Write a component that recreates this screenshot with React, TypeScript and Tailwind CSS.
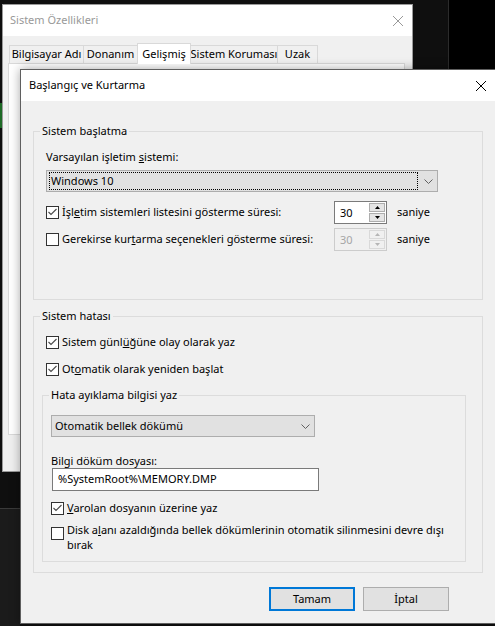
import React from 'react';

function Box({ checked }: { checked?: boolean }) {
  return (
    <span className="w-[13px] h-[13px] shrink-0 border border-[#333333] bg-white flex items-center justify-center">
      {checked && (
        <svg width="11" height="11" viewBox="0 0 11 11">
          <path d="M1.5 5 L4 7.5 L9.5 2" fill="none" stroke="#4a4a4a" strokeWidth="1.1" />
        </svg>
      )}
    </span>
  );
}

function Chevron() {
  return (
    <svg width="9" height="5" viewBox="0 0 9 5">
      <path d="M0.5 0.5 L4.5 4.5 L8.5 0.5" fill="none" stroke="#606060" strokeWidth="1" />
    </svg>
  );
}

function CloseX({ color }: { color: string }) {
  return (
    <svg width="10" height="10" viewBox="0 0 10 10">
      <path d="M0 0 L10 10 M10 0 L0 10" stroke={color} strokeWidth="1" />
    </svg>
  );
}

function Spin({ disabled }: { disabled?: boolean }) {
  const tri = disabled ? '#b5b5b5' : '#000000';
  return (
    <div
      className={
        disabled
          ? 'flex w-[53px] h-[23px] shrink-0 border border-[#cccccc] bg-[#f0f0f0] text-[#a6a6a6]'
          : 'flex w-[53px] h-[23px] shrink-0 border border-[#7a7a7a] bg-white'
      }
    >
      <span className="flex-1 pl-[5px] leading-[21px]">30</span>
      <div className="w-[18px] flex flex-col gap-px p-px">
        {['M0 3 L5 3 L2.5 0 Z', 'M0 0 L5 0 L2.5 3 Z'].map((d) => (
          <div
            key={d}
            className={
              disabled
                ? 'flex-1 flex items-center justify-center border border-[#d9d9d9] bg-[#f0f0f0]'
                : 'flex-1 flex items-center justify-center border border-[#adadad] bg-[#e5e5e5]'
            }
          >
            <svg width="5" height="3" viewBox="0 0 5 3">
              <path d={d} fill={tri} />
            </svg>
          </div>
        ))}
      </div>
    </div>
  );
}

export default function App() {
  return (
    <div className="relative w-[495px] h-[626px] overflow-hidden bg-[#0f0f0f] font-['Noto_Sans',sans-serif] text-[11px] text-black whitespace-nowrap">
      {/* desktop behind the windows */}
      <div className="absolute left-[448px] top-0 w-[47px] h-[69px] bg-black border-l border-[#2b2b2b]" />
      <div className="absolute left-0 top-[103px] w-[2px] h-[25px] bg-[#1e6a26]" />
      <div className="absolute left-0 top-[508px] w-[20px] h-[118px] bg-[#1b1b1b] border-t border-[#3a3a3a]" />

      {/* Sistem Özellikleri (inactive) */}
      <div className="absolute left-[2px] top-[4px] w-[411px] h-[468px] border border-[#9a9a9a] bg-[#f0f0f0] flex flex-col">
        <div className="h-[31px] shrink-0 bg-white flex items-center justify-between">
          <span className="pl-[7px] text-[#999999]">Sistem Özellikleri</span>
          <span className="pr-[9px] flex">
            <CloseX color="#999999" />
          </span>
        </div>
        <div className="pt-[7px] pl-[6px] flex items-end">
          <div className="w-[75px] h-[18px] border border-b-0 border-[#d9d9d9] flex items-center justify-center">Bilgisayar Adı</div>
          <div className="-ml-px w-[55px] h-[18px] border border-b-0 border-[#d9d9d9] flex items-center justify-center">Donanım</div>
          <div className="-ml-px relative z-10 -mb-px w-[54px] h-[21px] border border-b-0 border-[#d9d9d9] bg-white flex items-center justify-center">Gelişmiş</div>
          <div className="-ml-px w-[88px] h-[18px] border border-b-0 border-[#d9d9d9] flex items-center justify-center">Sistem Koruması</div>
          <div className="-ml-px w-[41px] h-[18px] border border-b-0 border-[#d9d9d9] flex items-center justify-center">Uzak</div>
        </div>
        <div className="ml-[5px] w-[397px] h-[372px] border border-[#d9d9d9] bg-white" />
      </div>

      {/* Başlangıç ve Kurtarma */}
      <div className="absolute left-[20px] top-[69px] w-[485px] h-[555px] border border-[#5f5f5f] bg-[#f0f0f0] shadow-[0_0_10px_rgba(0,0,0,0.35)] flex flex-col">
        <div className="h-[31px] shrink-0 bg-white flex items-center justify-between">
          <span className="pl-[8px]">Başlangıç ve Kurtarma</span>
          <span className="w-[46px] flex justify-center">
            <CloseX color="#000000" />
          </span>
        </div>

        <div className="pl-[12px] flex flex-col">
          <fieldset className="mt-[22px] w-[450px] h-[177px] border border-[#dcdcdc]">
            <legend className="ml-[6px] px-[2px] leading-[16px]">Sistem başlatma</legend>
            <div className="pl-[12px]">
              <div className="mt-[10px] leading-[16px]">
                Varsayılan işletim <u>s</u>istemi:
              </div>
              <div className="mt-[5px] w-[392px] h-[22px] border border-[#adadad] bg-[#e1e1e1] flex items-center pl-[2px]">
                <div className="w-[369px] h-[18px] border border-dotted border-black flex items-center pl-[1px]">Windows 10</div>
                <div className="flex-1 flex justify-center pl-[2px]">
                  <Chevron />
                </div>
              </div>
              <div className="mt-[9px] h-[23px] flex items-center">
                <div className="w-[288px] flex items-center gap-[3px]">
                  <Box checked />
                  <span>
                    İşl<u>e</u>tim sistemleri listesini gösterme süresi:
                  </span>
                </div>
                <Spin />
                <span className="ml-[10px]">saniye</span>
              </div>
              <div className="mt-[4px] h-[23px] flex items-center">
                <div className="w-[288px] flex items-center gap-[3px]">
                  <Box />
                  <span>
                    Gerekirse kur<u>t</u>arma seçenekleri gösterme süresi:
                  </span>
                </div>
                <Spin disabled />
                <span className="ml-[10px]">saniye</span>
              </div>
            </div>
          </fieldset>

          <fieldset className="mt-[8px] w-[450px] h-[265px] border border-[#dcdcdc]">
            <legend className="ml-[6px] px-[2px] leading-[16px]">Sistem hatası</legend>
            <div className="pl-[12px]">
              <div className="mt-[10px] h-[16px] flex items-center gap-[3px]">
                <Box checked />
                <span>
                  Sistem günl<u>ü</u>ğüne olay olarak yaz
                </span>
              </div>
              <div className="mt-[11px] h-[16px] flex items-center gap-[3px]">
                <Box checked />
                <span>
                  Ot<u>o</u>matik olarak yeniden başlat
                </span>
              </div>
            </div>

            <fieldset className="mt-[10px] ml-[8px] w-[424px] h-[175px] border border-[#dcdcdc]">
              <legend className="ml-[6px] px-[2px] leading-[16px]">Hata ayıklama bilgisi yaz</legend>
              <div className="pl-[8px]">
                <div className="mt-[12px] w-[264px] h-[22px] border border-[#adadad] bg-[#e1e1e1] flex items-center justify-between pl-[3px] pr-[4px]">
                  <span>Otomatik bellek dökümü</span>
                  <Chevron />
                </div>
                <div className="mt-[16px] leading-[15px]">Bilgi döküm dosyası:</div>
                <div className="ml-px w-[267px] h-[23px] border border-[#7a7a7a] bg-white flex items-center pl-[5px]">
                  %SystemRoot%\MEMORY.DMP
                </div>
                <div className="mt-[9px] h-[16px] flex items-center gap-[3px]">
                  <Box checked />
                  <span>
                    <u>V</u>arolan dosyanın üzerine yaz
                  </span>
                </div>
                <div className="mt-[6px] flex items-start gap-[3px]">
                  <span className="mt-[5px] flex">
                    <Box />
                  </span>
                  <span className="leading-[15px]">
                    Disk a<u>l</u>anı azaldığında bellek dökümlerinin otomatik silinmesini devre dışı
                    <br />
                    bırak
                  </span>
                </div>
              </div>
            </fieldset>
          </fieldset>

          <div className="mt-[14px] ml-[236px] flex gap-[8px]">
            <div className="w-[86px] h-[24px] border-2 border-[#0078d7] bg-[#e1e1e1] flex items-center justify-center">Tamam</div>
            <div className="w-[86px] h-[24px] border border-[#adadad] bg-[#e1e1e1] flex items-center justify-center">İptal</div>
          </div>
        </div>
      </div>
    </div>
  );
}
